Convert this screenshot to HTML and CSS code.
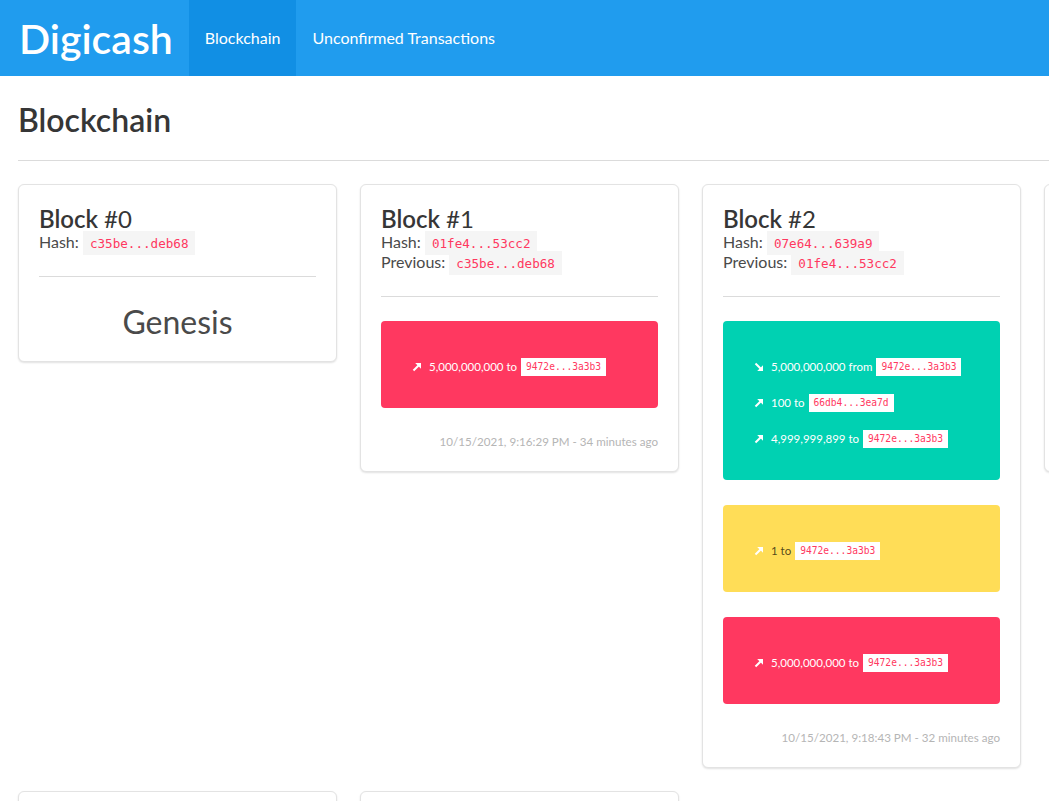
FILE: index.html
```html
<!DOCTYPE html>
<html lang="en">
<head>
<meta charset="utf-8">
<title>Digicash</title>
<link rel="stylesheet" href="styles.css">
</head>
<body>
<nav class="navbar">
  <a class="brand">Digicash</a>
  <a class="nav-item is-active">Blockchain</a>
  <a class="nav-item">Unconfirmed Transactions</a>
</nav>
<section class="section">
  <h1 class="page-title">Blockchain</h1>
  <hr class="page-rule">
  <div class="blocks">
    <div class="block-card">
      <h2 class="block-title">Block <span class="block-num">#0</span></h2>
      <div class="meta">Hash: <code class="hash">c35be...deb68</code></div>
      <hr class="card-rule">
      <p class="genesis">Genesis</p>
    </div>

    <div class="block-card">
      <h2 class="block-title">Block <span class="block-num">#1</span></h2>
      <div class="meta">Hash: <code class="hash">01fe4...53cc2</code></div>
      <div class="meta">Previous: <code class="hash">c35be...deb68</code></div>
      <hr class="card-rule">
      <div class="tx tx-danger">
        <div class="tx-row"><span class="tx-icon"><svg viewBox="0 0 10 10" width="10" height="10"><polygon points="3.2,1 9,1 9,6.8" fill="currentColor"/><line x1="1.5" y1="8.5" x2="6.8" y2="3.2" stroke="currentColor" stroke-width="2"/></svg></span>5,000,000,000 to <code class="addr">9472e...3a3b3</code></div>
      </div>
      <p class="stamp">10/15/2021, 9:16:29 PM - 34 minutes ago</p>
    </div>

    <div class="block-card">
      <h2 class="block-title">Block <span class="block-num">#2</span></h2>
      <div class="meta">Hash: <code class="hash">07e64...639a9</code></div>
      <div class="meta">Previous: <code class="hash">01fe4...53cc2</code></div>
      <hr class="card-rule">
      <div class="tx tx-primary">
        <div class="tx-row"><span class="tx-icon"><svg viewBox="0 0 10 10" width="10" height="10"><polygon points="3.2,9 9,9 9,3.2" fill="currentColor"/><line x1="1.5" y1="1.5" x2="6.8" y2="6.8" stroke="currentColor" stroke-width="2"/></svg></span>5,000,000,000 from <code class="addr">9472e...3a3b3</code></div>
        <div class="tx-row"><span class="tx-icon"><svg viewBox="0 0 10 10" width="10" height="10"><polygon points="3.2,1 9,1 9,6.8" fill="currentColor"/><line x1="1.5" y1="8.5" x2="6.8" y2="3.2" stroke="currentColor" stroke-width="2"/></svg></span>100 to <code class="addr">66db4...3ea7d</code></div>
        <div class="tx-row"><span class="tx-icon"><svg viewBox="0 0 10 10" width="10" height="10"><polygon points="3.2,1 9,1 9,6.8" fill="currentColor"/><line x1="1.5" y1="8.5" x2="6.8" y2="3.2" stroke="currentColor" stroke-width="2"/></svg></span>4,999,999,899 to <code class="addr">9472e...3a3b3</code></div>
      </div>
      <div class="tx tx-warning">
        <div class="tx-row"><span class="tx-icon"><svg viewBox="0 0 10 10" width="10" height="10"><polygon points="3.2,1 9,1 9,6.8" fill="currentColor"/><line x1="1.5" y1="8.5" x2="6.8" y2="3.2" stroke="currentColor" stroke-width="2"/></svg></span>1 to <code class="addr">9472e...3a3b3</code></div>
      </div>
      <div class="tx tx-danger">
        <div class="tx-row"><span class="tx-icon"><svg viewBox="0 0 10 10" width="10" height="10"><polygon points="3.2,1 9,1 9,6.8" fill="currentColor"/><line x1="1.5" y1="8.5" x2="6.8" y2="3.2" stroke="currentColor" stroke-width="2"/></svg></span>5,000,000,000 to <code class="addr">9472e...3a3b3</code></div>
      </div>
      <p class="stamp">10/15/2021, 9:18:43 PM - 32 minutes ago</p>
    </div>

    <div class="block-card">
      <h2 class="block-title">Block <span class="block-num">#3</span></h2>
      <div class="meta">Hash: <code class="hash">5b1a2...9f0c4</code></div>
      <div class="meta">Previous: <code class="hash">07e64...639a9</code></div>
      <hr class="card-rule">
      <div class="tx tx-danger">
        <div class="tx-row"><span class="tx-icon"><svg viewBox="0 0 10 10" width="10" height="10"><polygon points="3.2,1 9,1 9,6.8" fill="currentColor"/><line x1="1.5" y1="8.5" x2="6.8" y2="3.2" stroke="currentColor" stroke-width="2"/></svg></span>5,000,000,000 to <code class="addr">9472e...3a3b3</code></div>
      </div>
      <p class="stamp">10/15/2021, 9:21:02 PM - 30 minutes ago</p>
    </div>

    <div class="block-card">
      <h2 class="block-title">Block <span class="block-num">#4</span></h2>
      <div class="meta">Hash: <code class="hash">a83d0...17be2</code></div>
      <div class="meta">Previous: <code class="hash">5b1a2...9f0c4</code></div>
      <hr class="card-rule">
      <div class="tx tx-danger">
        <div class="tx-row"><span class="tx-icon"><svg viewBox="0 0 10 10" width="10" height="10"><polygon points="3.2,1 9,1 9,6.8" fill="currentColor"/><line x1="1.5" y1="8.5" x2="6.8" y2="3.2" stroke="currentColor" stroke-width="2"/></svg></span>5,000,000,000 to <code class="addr">9472e...3a3b3</code></div>
      </div>
      <p class="stamp">10/15/2021, 9:23:17 PM - 28 minutes ago</p>
    </div>

    <div class="block-card">
      <h2 class="block-title">Block <span class="block-num">#5</span></h2>
      <div class="meta">Hash: <code class="hash">e4c77...0d9a1</code></div>
      <div class="meta">Previous: <code class="hash">a83d0...17be2</code></div>
      <hr class="card-rule">
      <div class="tx tx-danger">
        <div class="tx-row"><span class="tx-icon"><svg viewBox="0 0 10 10" width="10" height="10"><polygon points="3.2,1 9,1 9,6.8" fill="currentColor"/><line x1="1.5" y1="8.5" x2="6.8" y2="3.2" stroke="currentColor" stroke-width="2"/></svg></span>5,000,000,000 to <code class="addr">9472e...3a3b3</code></div>
      </div>
      <p class="stamp">10/15/2021, 9:25:40 PM - 26 minutes ago</p>
    </div>
  </div>
</section>
</body>
</html>
```

FILE: styles.css
```css
html {
  overflow: hidden;
  background: #fff;
}

body {
  margin: 0;
  font-family: Lato, "Noto Sans", sans-serif;
  font-size: 16px;
  line-height: 1.5;
  color: #4a4a4a;
  min-width: 1400px;
}

.navbar {
  display: flex;
  align-items: stretch;
  height: 76px;
  background: #209cee;
}

.brand {
  display: flex;
  align-items: center;
  padding: 0 16px 0 19px;
  font-size: 41px;
  font-weight: 600;
  color: #fff;
  line-height: 1;
}

.nav-item {
  display: flex;
  align-items: center;
  padding: 0 16px;
  font-size: 16px;
  color: #fff;
}

.nav-item.is-active {
  background: #118fe4;
}

.section {
  padding: 26px 18px 40px;
}

.page-title {
  margin: 0;
  font-size: 32px;
  font-weight: 600;
  line-height: 36px;
  color: #363636;
}

.page-rule {
  margin: 22px 0 23px;
  border: 0;
  height: 1px;
  background: #dbdbdb;
}

.blocks {
  display: grid;
  grid-template-columns: repeat(4, 319px);
  gap: 23px;
  align-items: start;
}

.block-card {
  background: #fff;
  border: 1px solid #e3e3e3;
  border-radius: 6px;
  box-shadow: 0 1px 2px rgba(10, 10, 10, 0.12);
  padding: 20px;
}

.block-title {
  margin: 0;
  font-size: 24px;
  line-height: 27px;
  font-weight: 600;
  color: #363636;
}

.block-num {
  font-weight: 400;
}

.meta {
  height: 20px;
  line-height: 20px;
  font-size: 16px;
  white-space: nowrap;
}

.hash {
  font-family: "DejaVu Sans Mono", "Liberation Mono", monospace;
  font-size: 12.6px;
  line-height: 14px;
  background: #f5f5f5;
  color: #ff3860;
  padding: 5px 7px 4px;
}

.card-rule {
  margin: 24px 0;
  border: 0;
  height: 1px;
  background: #dbdbdb;
}

.genesis {
  margin: 0;
  padding: 3px 0 1px;
  text-align: center;
  font-size: 32px;
  line-height: 36px;
  color: #4a4a4a;
}

.tx {
  border-radius: 4px;
  padding: 28px 20px 23px 24px;
  margin-bottom: 25px;
  color: #fff;
  font-size: 11.5px;
}

.tx-danger {
  background: #ff3860;
}

.tx-primary {
  background: #00d1b2;
}

.tx-warning {
  background: #ffdd57;
  color: rgba(0, 0, 0, 0.7);
}

.tx-row {
  display: flex;
  align-items: center;
  height: 36px;
  white-space: pre;
}

.tx-icon {
  display: inline-flex;
  justify-content: center;
  align-items: center;
  width: 24px;
  color: #fff;
}

.tx-icon svg {
  display: block;
}

.addr {
  font-family: "DejaVu Sans Mono", "Liberation Mono", monospace;
  font-size: 9.6px;
  line-height: 12px;
  background: #fff;
  color: #ff3860;
  padding: 3px 5px;
  margin-left: 1px;
}

.stamp {
  margin: 0;
  text-align: right;
  font-size: 11.6px;
  line-height: 18px;
  color: #b5b5b5;
}
```
